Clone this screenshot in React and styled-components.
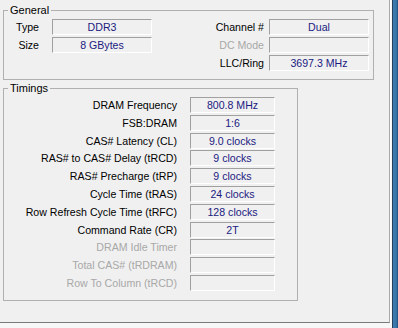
import React from "react";
import styled, { createGlobalStyle } from "styled-components";

const Global = createGlobalStyle`
  html, body {
    margin: 0;
    padding: 0;
    background: #f0f0f0;
  }
  body {
    font-family: "Liberation Sans", Arial, sans-serif;
    font-size: 10.6px;
    color: #000;
  }
`;

const Window = styled.div`
  display: flex;
  width: 398px;
  height: 328px;
  overflow: hidden;
`;

const Main = styled.div`
  width: 392px;
  display: flex;
  flex-direction: column;
  background: #f7f7f7;
`;

const Panel = styled.div`
  width: 386px;
  height: 322px;
  padding-left: 3px;
  background: #f0f0f0;
  border-right: 1px solid #a8a8a8;
  border-bottom: 1px solid #7a7a7a;
  box-shadow: 1px 0 0 #ffffff;
  display: flex;
  flex-direction: column;
`;

const Frame = styled.div`
  flex: 1;
  border-left: 1px solid #26405c;
  background: linear-gradient(90deg, #3d7db2 0%, #3572a6 70%, #1f4a73 100%);
`;

const Group = styled.fieldset`
  box-sizing: border-box;
  width: ${(p) => p.$width}px;
  margin: ${(p) => p.$top}px 0 0 0;
  padding: ${(p) => p.$padTop}px 4px 0 0;
  border: 1px solid #b0b0b0;
  min-inline-size: 0;
  height: ${(p) => p.$height}px;
`;

const Legend = styled.legend`
  margin-left: 4px;
  padding: 0 2px;
  line-height: 13px;
  font-size: 11px;
`;

const GeneralGrid = styled.div`
  display: grid;
  grid-template-columns: 48px 100px 1fr 100px;
  grid-auto-rows: 16px;
  row-gap: 2px;
`;

const TimingGrid = styled.div`
  display: grid;
  grid-template-columns: 186px 85px;
  grid-auto-rows: 16px;
  row-gap: 1.8px;
`;

const Label = styled.div`
  text-align: right;
  padding-right: ${(p) => p.$gap}px;
  line-height: 16px;
  white-space: nowrap;
  color: ${(p) => (p.$dim ? "#a8a8a8" : "#000")};
`;

const Field = styled.div`
  box-sizing: border-box;
  height: 16px;
  line-height: 14px;
  text-align: center;
  color: #1a1a80;
  background: #f0f0f0;
  border-top: 1px solid #a0a0a0;
  border-left: 1px solid #a0a0a0;
  border-right: 1px solid #ffffff;
  border-bottom: 1px solid #ffffff;
  white-space: nowrap;
`;

const general = [
  ["Type", "DDR3", "Channel #", "Dual", false],
  ["Size", "8 GBytes", "DC Mode", "", true],
  ["", null, "LLC/Ring", "3697.3 MHz", false],
];

const timings = [
  ["DRAM Frequency", "800.8 MHz"],
  ["FSB:DRAM", "1:6"],
  ["CAS# Latency (CL)", "9.0 clocks"],
  ["RAS# to CAS# Delay (tRCD)", "9 clocks"],
  ["RAS# Precharge (tRP)", "9 clocks"],
  ["Cycle Time (tRAS)", "24 clocks"],
  ["Row Refresh Cycle Time (tRFC)", "128 clocks"],
  ["Command Rate (CR)", "2T"],
  ["DRAM Idle Timer", "", true],
  ["Total CAS# (tRDRAM)", "", true],
  ["Row To Column (tRCD)", "", true],
];

export default function App() {
  return (
    <Window>
      <Global />
      <Main>
        <Panel>
          <Group $width={371} $top={4} $padTop={2} $height={76}>
            <Legend>General</Legend>
            <GeneralGrid>
              {general.map(([l1, v1, l2, v2, dim]) => (
                <React.Fragment key={l2}>
                  <Label $gap={13}>{l1}</Label>
                  {v1 === null ? <div /> : <Field>{v1}</Field>}
                  <Label $gap={5} $dim={dim}>{l2}</Label>
                  <Field>{v2}</Field>
                </React.Fragment>
              ))}
            </GeneralGrid>
          </Group>
          <Group $width={295} $top={2} $padTop={2} $height={219}>
            <Legend>Timings</Legend>
            <TimingGrid>
              {timings.map(([label, value, dim]) => (
                <React.Fragment key={label}>
                  <Label $gap={13} $dim={dim}>{label}</Label>
                  <Field>{value}</Field>
                </React.Fragment>
              ))}
            </TimingGrid>
          </Group>
        </Panel>
      </Main>
      <Frame />
    </Window>
  );
}
